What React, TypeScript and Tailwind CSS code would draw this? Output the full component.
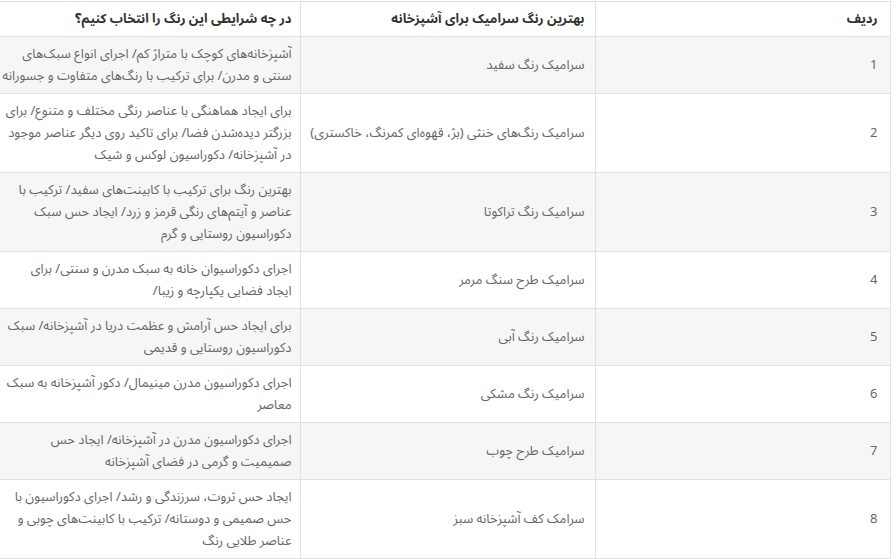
import React from 'react';

type Row = {
  id: number;
  color: string;
  when: string[];
};

const rows: Row[] = [
  {
    id: 1,
    color: 'سرامیک رنگ سفید',
    when: [
      'آشپزخانه‌های کوچک با متراژ کم/ اجرای انواع سبک‌های',
      'سنتی و مدرن/ برای ترکیب با رنگ‌های متفاوت و جسورانه',
    ],
  },
  {
    id: 2,
    color: 'سرامیک رنگ‌های خنثی (بژ، قهوه‌ای کمرنگ، خاکستری)',
    when: [
      'برای ایجاد هماهنگی با عناصر رنگی مختلف و متنوع/ برای',
      'بزرگتر دیده‌شدن فضا/ برای تاکید روی دیگر عناصر موجود',
      'در آشپزخانه/ دکوراسیون لوکس و شیک',
    ],
  },
  {
    id: 3,
    color: 'سرامیک رنگ تراکوتا',
    when: [
      'بهترین رنگ برای ترکیب با کابینت‌های سفید/ ترکیب با',
      'عناصر و آیتم‌های رنگی قرمز و زرد/ ایجاد حس سبک',
      'دکوراسیون روستایی و گرم',
    ],
  },
  {
    id: 4,
    color: 'سرامیک طرح سنگ مرمر',
    when: [
      'اجرای دکوراسیوان خانه به سبک مدرن و سنتی/ برای',
      'ایجاد فضایی یکپارچه و زیبا/',
    ],
  },
  {
    id: 5,
    color: 'سرامیک رنگ آبی',
    when: [
      'برای ایجاد حس آرامش و عظمت دریا در آشپزخانه/ سبک',
      'دکوراسیون روستایی و قدیمی',
    ],
  },
  {
    id: 6,
    color: 'سرامیک رنگ مشکی',
    when: ['اجرای دکوراسیون مدرن مینیمال/ دکور آشپزخانه به سبک', 'معاصر'],
  },
  {
    id: 7,
    color: 'سرامیک طرح چوب',
    when: ['اجرای دکوراسیون مدرن در آشپزخانه/ ایجاد حس', 'صمیمیت و گرمی در فضای آشپزخانه'],
  },
  {
    id: 8,
    color: 'سرامک کف آشپزخانه سبز',
    when: [
      'ایجاد حس ثروت، سرزندگی و رشد/ اجرای دکوراسیون با',
      'حس صمیمی و دوستانه/ ترکیب با کابینت‌های چوبی و',
      'عناصر طلایی رنگ',
    ],
  },
];

export default function App() {
  return (
    <div className="min-h-screen bg-white pt-px">
      <table
        dir="rtl"
        className="w-[890px] table-fixed border-collapse text-right text-[13px] leading-[22px] text-[#666]"
        style={{ fontFamily: '"Noto Sans Arabic", "Vazirmatn", "DejaVu Sans", sans-serif' }}
      >
        <colgroup>
          <col className="w-[295px]" />
          <col className="w-[295px]" />
          <col className="w-[300px]" />
        </colgroup>
        <thead>
          <tr className="bg-white">
            <th className="border border-[#e2e2e2] px-[12px] py-[6px] text-right font-bold text-[#333]">
              ردیف
            </th>
            <th className="border border-[#e2e2e2] px-[10px] py-[6px] text-right font-bold text-[#333]">
              بهترین رنگ سرامیک برای آشپزخانه
            </th>
            <th className="border border-l-0 border-[#e2e2e2] px-[8px] py-[6px] text-right font-bold text-[#333]">
              در چه شرایطی این رنگ را انتخاب کنیم؟
            </th>
          </tr>
        </thead>
        <tbody>
          {rows.map((r) => (
            <tr key={r.id} className={r.id % 2 === 1 ? 'bg-[#f6f6f6]' : 'bg-white'}>
              <td className="border border-[#e2e2e2] px-[12px] py-[6px] align-middle">{r.id}</td>
              <td className="whitespace-nowrap border border-[#e2e2e2] px-[10px] py-[6px] align-middle">
                {r.color}
              </td>
              <td className="border border-l-0 border-[#e2e2e2] px-[8px] py-[6px] align-middle">
                {r.when.map((line, i) => (
                  <div key={i} className="whitespace-nowrap">
                    {line}
                  </div>
                ))}
              </td>
            </tr>
          ))}
        </tbody>
      </table>
    </div>
  );
}
